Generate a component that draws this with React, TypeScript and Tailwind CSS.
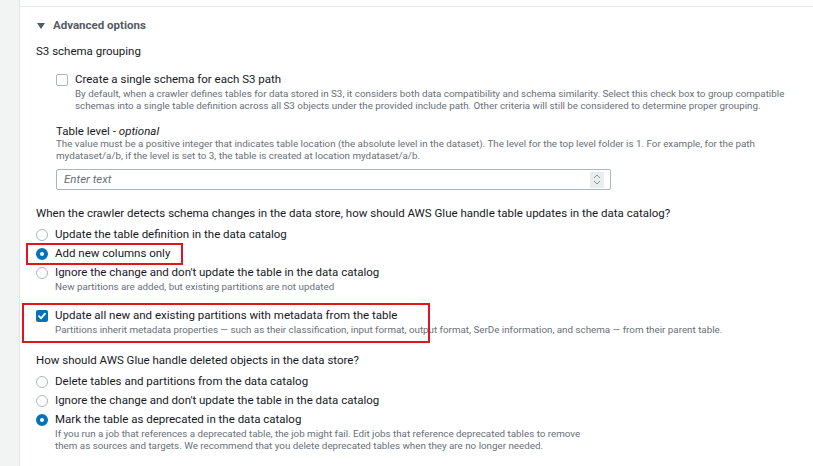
import React from "react";

const FONT = "font-['Roboto','Liberation_Sans',sans-serif]";

function Radio({ checked }: { checked?: boolean }) {
  return checked ? (
    <span className="w-[12px] h-[12px] shrink-0 rounded-full border-[4px] border-[#0073bb] bg-white" />
  ) : (
    <span className="w-[12px] h-[12px] shrink-0 rounded-full border border-[#aab7b8] bg-white" />
  );
}

function Checkbox({ checked }: { checked?: boolean }) {
  return checked ? (
    <span className="w-[12px] h-[12px] shrink-0 rounded-[2px] bg-[#0073bb] flex items-center justify-center">
      <svg width="10" height="10" viewBox="0 0 10 10" fill="none">
        <path d="M2 5.2 L4.1 7.3 L8 2.6" stroke="white" strokeWidth="1.8" strokeLinecap="round" strokeLinejoin="round" />
      </svg>
    </span>
  ) : (
    <span className="w-[12px] h-[12px] shrink-0 rounded-[2px] border border-[#aab7b8] bg-white" />
  );
}

function Option({
  control,
  label,
  desc,
  box,
}: {
  control: React.ReactNode;
  label: string;
  desc?: React.ReactNode;
  box?: string;
}) {
  return (
    <div className="relative flex gap-[7px]">
      <div className="h-[19px] flex items-center">{control}</div>
      <div>
        <div className="text-[11.5px] leading-[19px] text-[#16191f]">{label}</div>
        {desc && <div className="text-[9.8px] leading-[12px] text-[#687078] -mt-[1px]">{desc}</div>}
      </div>
      {box && <span className={`absolute pointer-events-none border-2 border-[#e0161f] ${box}`} />}
    </div>
  );
}

export default function App() {
  return (
    <div className={`${FONT} flex w-[813px] h-[466px] bg-white overflow-hidden`}>
      <div className="w-[20px] shrink-0 bg-[#f2f3f3] border-r border-[#e2e5e5]" />
      <main className="flex-1">
        <div className="h-[7px] border-b border-[#eaeded]" />
        <div className="pl-[16px]">
          {/* Collapsible header */}
          <div className="mt-[9px] flex items-center gap-[8px] h-[19px] text-[11.5px] font-bold text-[#545b64]">
            <svg width="8" height="6" viewBox="0 0 8 6" className="ml-[1px]">
              <path d="M0 0 H8 L4 6 Z" fill="#545b64" />
            </svg>
            <span>Advanced options</span>
          </div>

          <div className="mt-[7px] text-[11.5px] leading-[19px] text-[#16191f]">S3 schema grouping</div>

          <div className="mt-[9px] pl-[20px]">
            <Option
              control={<Checkbox />}
              label="Create a single schema for each S3 path"
              desc={
                <>
                  By default, when a crawler defines tables for data stored in S3, it considers both data compatibility and schema similarity. Select this check box to group compatible
                  <br />
                  schemas into a single table definition across all S3 objects under the provided include path. Other criteria will still be considered to determine proper grouping.
                </>
              }
            />

            <div className="mt-[10px] text-[11.5px] leading-[19px] text-[#16191f]">
              Table level - <i>optional</i>
            </div>
            <div className="-mt-[3px] text-[9.8px] leading-[12px] text-[#687078]">
              The value must be a positive integer that indicates table location (the absolute level in the dataset). The level for the top level folder is 1. For example, for the path
              <br />
              mydataset/a/b, if the level is set to 3, the table is created at location mydataset/a/b.
            </div>
            <div className="mt-[7px] w-[555px] h-[21px] border border-[#aab7b8] rounded-[2px] flex items-center justify-between pl-[7px] pr-[6px]">
              <span className="text-[11.5px] italic text-[#687078]">Enter text</span>
              <span className="w-[14px] h-[16px] bg-[#eaeded] flex flex-col items-center justify-center gap-[1px]">
                <svg width="8" height="5" viewBox="0 0 8 5" fill="none">
                  <path d="M1 4 L4 1 L7 4" stroke="#879596" strokeWidth="1" />
                </svg>
                <svg width="8" height="5" viewBox="0 0 8 5" fill="none">
                  <path d="M1 1 L4 4 L7 1" stroke="#879596" strokeWidth="1" />
                </svg>
              </span>
            </div>
          </div>

          <div className="mt-[14px] text-[11.5px] leading-[19px] text-[#16191f]">
            When the crawler detects schema changes in the data store, how should AWS Glue handle table updates in the data catalog?
          </div>
          <div className="mt-[2px] flex flex-col">
            <Option control={<Radio />} label="Update the table definition in the data catalog" />
            <Option
              control={<Radio checked />}
              label="Add new columns only"
              box="-left-[10px] top-[-1px] bottom-[-2px] w-[157px]"
            />
            <Option
              control={<Radio />}
              label="Ignore the change and don't update the table in the data catalog"
              desc="New partitions are added, but existing partitions are not updated"
            />
          </div>

          <div className="mt-[13px]">
            <Option
              control={<Checkbox checked />}
              label="Update all new and existing partitions with metadata from the table"
              desc="Partitions inherit metadata properties — such as their classification, input format, output format, SerDe information, and schema — from their parent table."
              box="-left-[14px] top-[-3px] bottom-[-7px] w-[408px]"
            />
          </div>

          <div className="mt-[15px] text-[11.5px] leading-[19px] text-[#16191f]">
            How should AWS Glue handle deleted objects in the data store?
          </div>
          <div className="mt-[2px] flex flex-col">
            <Option control={<Radio />} label="Delete tables and partitions from the data catalog" />
            <Option control={<Radio />} label="Ignore the change and don't update the table in the data catalog" />
            <Option
              control={<Radio checked />}
              label="Mark the table as deprecated in the data catalog"
              desc={
                <>
                  If you run a job that references a deprecated table, the job might fail. Edit jobs that reference deprecated tables to remove
                  <br />
                  them as sources and targets. We recommend that you delete deprecated tables when they are no longer needed.
                </>
              }
            />
          </div>
        </div>
      </main>
    </div>
  );
}
